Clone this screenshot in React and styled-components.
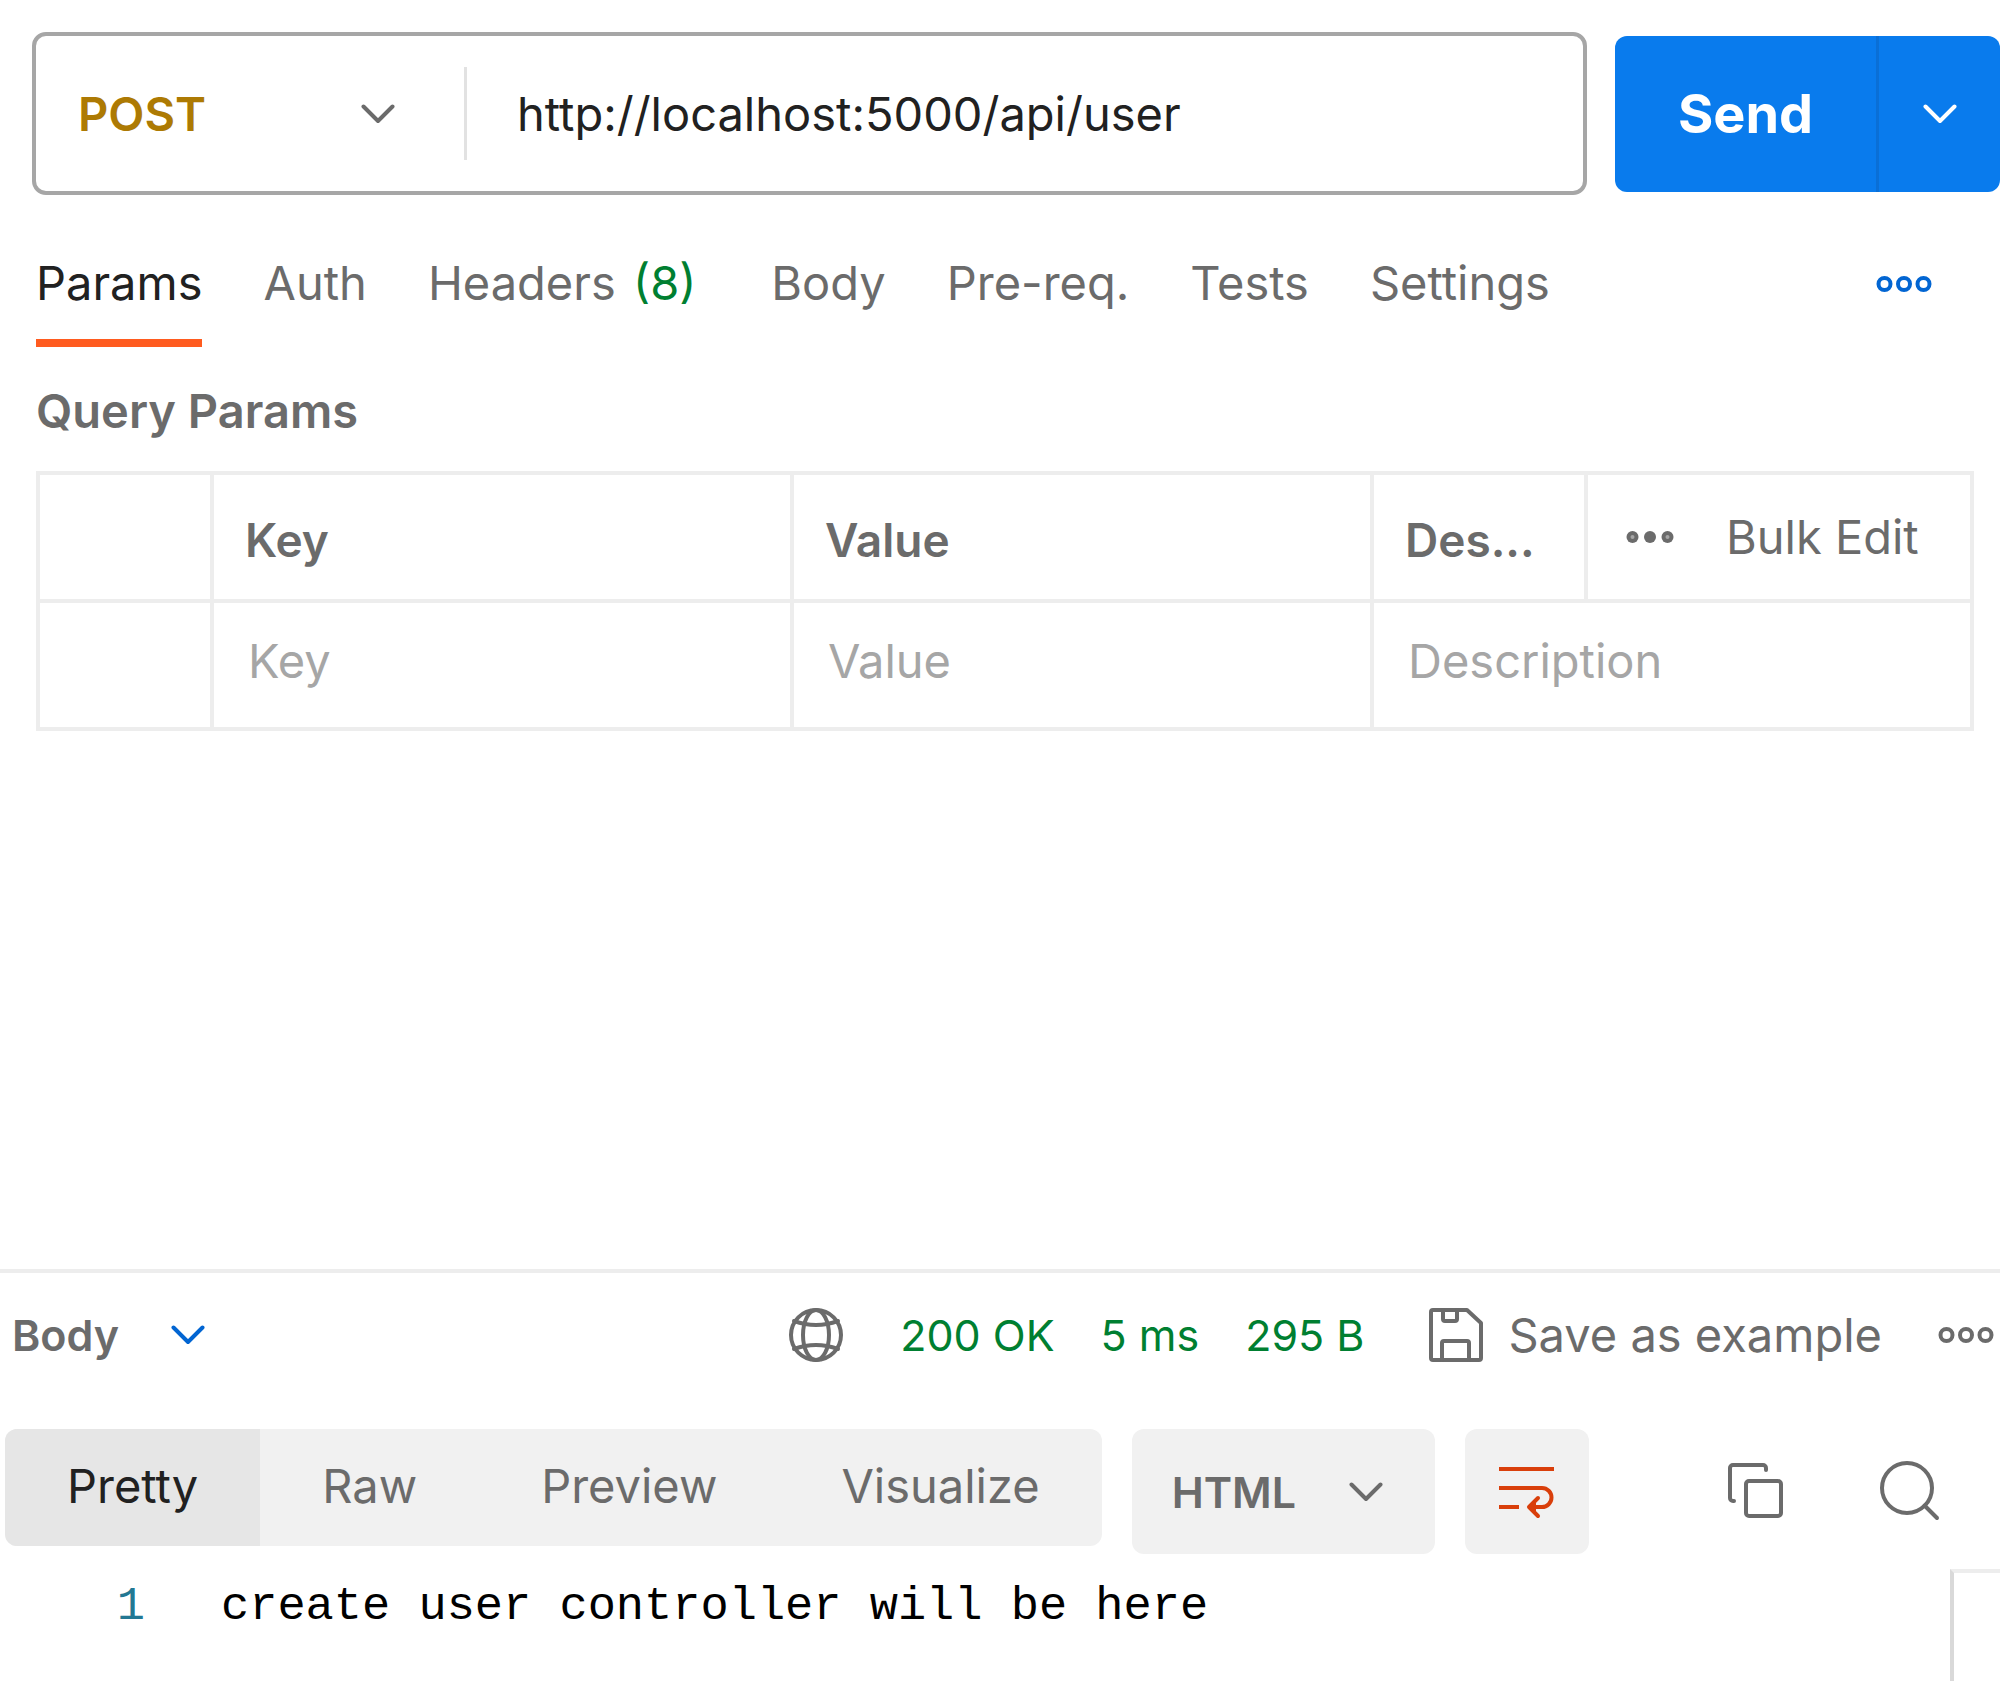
import React, { useState } from "react";
import styled, { createGlobalStyle } from "styled-components";

const color = {
  text: "#212121",
  muted: "#6b6b6b",
  placeholder: "#a6a6a6",
  line: "#ededed",
  surface: "#f1f1f1",
  surfaceActive: "#e6e6e6",
  blue: "#097bed",
  link: "#0265d2",
  green: "#007f31",
  amber: "#ad7a03",
  orange: "#ff5b1f",
  rust: "#d93f0b",
};

const GlobalStyle = createGlobalStyle`
  *, *::before, *::after { box-sizing: border-box; }
  body {
    margin: 0;
    background: #fff;
    color: ${color.muted};
    font: 400 47px/56px Inter, "Liberation Sans", sans-serif;
  }
  button, input, select { margin: 0; font: inherit; color: inherit; }
`;

const Page = styled.main`
  display: flex;
  flex-direction: column;
  min-height: 100vh;
  overflow: hidden;
`;

const Icon = styled.svg`
  display: block;
  flex: none;
  fill: none;
  stroke: currentColor;
  stroke-width: 4;
  stroke-linecap: round;
  stroke-linejoin: round;
`;

const PlainButton = styled.button`
  display: flex;
  align-items: center;
  gap: ${(p) => p.$gap || 0}px;
  padding: 0;
  border: 0;
  background: none;
  color: ${(p) => p.$color || "inherit"};
  white-space: nowrap;
  cursor: pointer;
`;

/* ---- request line ---- */

const RequestLine = styled.form`
  display: flex;
  align-items: center;
  gap: 28px;
  padding: 32px 0 0 32px;
`;

const UrlBox = styled.div`
  flex: 1;
  display: flex;
  align-items: center;
  height: 163px;
  border: 4px solid ${color.placeholder};
  border-radius: 14px;
`;

const SelectWrap = styled.div`
  position: relative;
  display: flex;
  align-items: center;
  width: ${(p) => p.$width}px;
  height: ${(p) => p.$height}px;
  border-radius: 12px;
  background: ${(p) => p.$background || "none"};

  svg {
    position: absolute;
    right: ${(p) => p.$inset}px;
    color: ${(p) => p.$arrow || color.muted};
    pointer-events: none;
  }
`;

const Select = styled.select`
  width: 100%;
  height: 100%;
  padding: 0 0 0 ${(p) => p.$indent}px;
  border: 0;
  background: none;
  appearance: none;
  color: ${(p) => p.$color || color.muted};
  font-size: ${(p) => p.$size || 43}px;
  font-weight: 600;
`;

const MethodArea = styled.div`
  border-right: 3px solid #e2e2e2;
`;

const UrlInput = styled.input`
  flex: 1;
  min-width: 0;
  padding: 0 50px;
  border: 0;
  outline: 0;
  background: none;
  color: ${color.text};
`;

const SendGroup = styled.div`
  display: flex;
  height: 156px;
  border-radius: 12px;
  overflow: hidden;
`;

const SendButton = styled.button`
  width: ${(p) => p.$width}px;
  display: grid;
  place-items: center;
  padding: 0;
  border: 0;
  border-right: ${(p) => (p.$divided ? "3px solid #0a6fd6" : "0")};
  background: ${color.blue};
  color: #fff;
  font-size: 54px;
  font-weight: 700;
`;

/* ---- request tabs ---- */

const Tabs = styled.nav`
  display: flex;
  align-items: center;
  gap: 61px;
  margin-top: 32px;
  padding: 0 68px 0 36px;
`;

const Tab = styled.button`
  padding: 28px 0;
  border: 0;
  border-bottom: 8px solid ${(p) => (p.$active ? color.orange : "transparent")};
  background: none;
  color: ${(p) => (p.$active ? color.text : color.muted)};
  white-space: nowrap;
`;

const Count = styled.span`
  padding: 0 14px 0 4px;
  color: ${color.green};
`;

const TabsMore = styled(PlainButton)`
  margin-left: auto;
  padding-bottom: 6px;
`;

/* ---- query params ---- */

const ParamsPanel = styled.section`
  flex: 1;
  padding: 36px 26px 32px 36px;
`;

const PanelTitle = styled.h2`
  margin: 0 0 32px;
  font-size: 47px;
  font-weight: 600;
`;

const ParamsTable = styled.table`
  width: 100%;
  table-layout: fixed;
  border-collapse: collapse;
`;

const Col = styled.col`
  width: ${(p) => (p.$width ? p.$width + "px" : "auto")};
`;

const HeadCell = styled.th`
  height: 128px;
  padding: 6px 31px 0;
  border: 4px solid ${color.line};
  text-align: left;
  font-size: 46px;
  font-weight: 600;
  white-space: nowrap;
`;

const BodyCell = styled.td`
  height: 128px;
  padding: 0 34px 8px;
  border: 4px solid ${color.line};
`;

const ActionCell = styled.td`
  padding: 0 38px;
  border: 4px solid ${color.line};
`;

const ActionRow = styled.div`
  display: flex;
  align-items: center;
  gap: 52px;
`;

const CellInput = styled.input`
  display: block;
  width: 100%;
  padding: 0;
  border: 0;
  outline: 0;
  background: none;

  &::placeholder { color: ${color.placeholder}; opacity: 1; }
`;

/* ---- response ---- */

const Response = styled.section`
  border-top: 4px solid ${color.line};
`;

const ResponseHeader = styled.header`
  display: flex;
  align-items: center;
  justify-content: space-between;
  height: 124px;
  padding-right: 6px;
`;

const ResponseMeta = styled.div`
  display: flex;
  align-items: center;
  gap: 56px;
`;

const Status = styled.div`
  display: flex;
  align-items: center;
  gap: 46px;
  padding-right: 8px;
  color: ${color.green};
  font-size: 43px;
  white-space: nowrap;
`;

const ViewBar = styled.div`
  display: flex;
  align-items: flex-start;
  gap: 30px;
  padding: 32px 58px 0 5px;
`;

const Segments = styled.div`
  display: flex;
  height: 117px;
  border-radius: 12px;
  background: ${color.surface};
  overflow: hidden;
`;

const Segment = styled.button`
  padding: 0 62px 4px;
  border: 0;
  background: ${(p) => (p.$active ? color.surfaceActive : "none")};
  color: ${(p) => (p.$active ? color.text : color.muted)};
`;

const WrapToggle = styled.button`
  display: grid;
  place-items: center;
  width: 124px;
  height: 125px;
  padding: 0;
  border: 0;
  border-radius: 12px;
  background: ${color.surface};
  color: ${color.rust};
`;

const ViewTools = styled.div`
  display: flex;
  align-items: center;
  gap: 92px;
  height: 124px;
  margin-left: auto;
`;

const CodeArea = styled.div`
  display: flex;
  height: 127px;
  font-family: "Liberation Mono", monospace;
  line-height: 72px;
  color: #000;
`;

const LineNumber = styled.span`
  width: 145px;
  padding-top: 17px;
  text-align: right;
  color: #237893;
`;

const CodeLine = styled.code`
  flex: 1;
  padding: 17px 0 0 76px;
  font: inherit;
  white-space: pre;
`;

const Minimap = styled.aside`
  width: 50px;
  margin-top: 15px;
  border-top: 4px solid ${color.line};
  border-left: 4px solid #d9d9d9;
`;

const Chevron = () => (
  <Icon width="34" height="20" viewBox="0 0 34 20" aria-hidden="true">
    <path d="M2.5 2.5 17 17 31.5 2.5" />
  </Icon>
);

const Rings = () => (
  <Icon width="56" height="18" viewBox="0 0 56 18" aria-hidden="true">
    <circle cx="8.5" cy="9" r="6" />
    <circle cx="28" cy="9" r="6" />
    <circle cx="47.5" cy="9" r="6" />
  </Icon>
);

const Dots = () => (
  <Icon width="48" height="18" viewBox="0 0 48 18" aria-hidden="true">
    <g fill="currentColor" stroke="none">
      <circle cx="6.5" cy="9" r="6" />
      <circle cx="24" cy="9" r="6" />
      <circle cx="41.5" cy="9" r="6" />
    </g>
    <g fill="#a6a6a6" stroke="none">
      <circle cx="6.5" cy="9" r="2" />
      <circle cx="41.5" cy="9" r="2" />
    </g>
  </Icon>
);

const Globe = () => (
  <Icon width="56" height="56" viewBox="0 0 56 56" role="img" aria-label="Network">
    <circle cx="28" cy="28" r="25" />
    <ellipse cx="28" cy="28" rx="13" ry="25" />
    <path d="M6 14Q28 22 50 14M6 42Q28 34 50 42" />
  </Icon>
);

const Save = () => (
  <Icon width="56" height="56" viewBox="0 0 56 56" aria-hidden="true">
    <path d="M5 3H39L53 16V51a2 2 0 0 1-2 2H5a2 2 0 0 1-2-2V5a2 2 0 0 1 2-2Z" />
    <path d="M15 3V12a2 2 0 0 0 2 2H27a2 2 0 0 0 2-2V3M14 53V36a2 2 0 0 1 2-2H39a2 2 0 0 1 2 2V53" />
  </Icon>
);

const WrapIcon = () => (
  <Icon width="60" height="60" viewBox="0 0 60 60" aria-hidden="true">
    <path strokeLinecap="butt" d="M2 7H57M2 26H45a9.5 9.5 0 0 1 0 19H33M2 45H22" />
    <path d="M41 36 32 45 41 54" />
    <path d="M32 45 39 38V52Z" fill="currentColor" stroke="none" />
  </Icon>
);

const Copy = () => (
  <Icon width="60" height="60" viewBox="0 0 60 60" aria-hidden="true">
    <rect x="20" y="20" width="35" height="35" rx="3" />
    <path d="M8 40H7a3 3 0 0 1-3-3V7a3 3 0 0 1 3-3H37a3 3 0 0 1 3 3V9" />
  </Icon>
);

const Search = () => (
  <Icon width="64" height="64" viewBox="0 0 64 64" aria-hidden="true">
    <circle cx="29" cy="29" r="25" />
    <path d="M46.5 46.5 59 59" />
  </Icon>
);

const requestTabs = [
  { label: "Params" },
  { label: "Auth" },
  { label: "Headers", count: 8 },
  { label: "Body" },
  { label: "Pre-req." },
  { label: "Tests" },
  { label: "Settings" },
];

const views = ["Pretty", "Raw", "Preview", "Visualize"];

export default function App() {
  const [tab, setTab] = useState("Params");
  const [view, setView] = useState("Pretty");
  const [url, setUrl] = useState("http://localhost:5000/api/user");

  return (
    <Page>
      <GlobalStyle />
      <RequestLine onSubmit={(e) => e.preventDefault()}>
        <UrlBox>
          <MethodArea>
            <SelectWrap $width={428} $height={93} $inset={69}>
              <Select aria-label="Method" $indent={42} $size={47} $color={color.amber} defaultValue="POST">
                <option>POST</option>
              </Select>
              <Chevron />
            </SelectWrap>
          </MethodArea>
          <UrlInput aria-label="Request URL" value={url} onChange={(e) => setUrl(e.target.value)} />
        </UrlBox>
        <SendGroup>
          <SendButton type="submit" $width={264} $divided>Send</SendButton>
          <SendButton type="button" $width={121} aria-label="Send options"><Chevron /></SendButton>
        </SendGroup>
      </RequestLine>

      <Tabs aria-label="Request">
        {requestTabs.map(({ label, count }) => (
          <Tab key={label} type="button" $active={tab === label} onClick={() => setTab(label)}>
            {label}
            {count && <> <Count>({count})</Count></>}
          </Tab>
        ))}
        <TabsMore type="button" $color={color.link} aria-label="More tabs"><Rings /></TabsMore>
      </Tabs>

      <ParamsPanel>
        <PanelTitle>Query Params</PanelTitle>
        <ParamsTable>
          <colgroup>
            <Col $width={174} />
            <Col />
            <Col />
            <Col $width={214} />
            <Col $width={386} />
          </colgroup>
          <thead>
            <tr>
              <HeadCell />
              <HeadCell>Key</HeadCell>
              <HeadCell>Value</HeadCell>
              <HeadCell>Des...</HeadCell>
              <ActionCell>
                <ActionRow>
                  <PlainButton type="button" aria-label="Columns"><Dots /></PlainButton>
                  <PlainButton type="button">Bulk Edit</PlainButton>
                </ActionRow>
              </ActionCell>
            </tr>
          </thead>
          <tbody>
            <tr>
              <BodyCell />
              <BodyCell><CellInput aria-label="Key" placeholder="Key" /></BodyCell>
              <BodyCell><CellInput aria-label="Value" placeholder="Value" /></BodyCell>
              <BodyCell colSpan={2}><CellInput aria-label="Description" placeholder="Description" /></BodyCell>
            </tr>
          </tbody>
        </ParamsTable>
      </ParamsPanel>

      <Response>
        <ResponseHeader>
          <SelectWrap $width={205} $height={93} $inset={0} $arrow={color.link}>
            <Select aria-label="Response section" $indent={12} defaultValue="Body">
              <option>Body</option>
            </Select>
            <Chevron />
          </SelectWrap>
          <ResponseMeta>
            <Globe />
            <Status>
              <span>200 OK</span>
              <span>5 ms</span>
              <span>295 B</span>
            </Status>
            <PlainButton type="button" $gap={24}><Save />Save as example</PlainButton>
            <PlainButton type="button" aria-label="More response actions"><Rings /></PlainButton>
          </ResponseMeta>
        </ResponseHeader>

        <ViewBar>
          <Segments>
            {views.map((name) => (
              <Segment key={name} type="button" $active={view === name} onClick={() => setView(name)}>
                {name}
              </Segment>
            ))}
          </Segments>
          <SelectWrap $width={303} $height={125} $inset={52} $background={color.surface}>
            <Select aria-label="Response format" $indent={40} defaultValue="HTML">
              <option>HTML</option>
            </Select>
            <Chevron />
          </SelectWrap>
          <WrapToggle type="button" aria-label="Wrap lines"><WrapIcon /></WrapToggle>
          <ViewTools>
            <PlainButton type="button" aria-label="Copy"><Copy /></PlainButton>
            <PlainButton type="button" aria-label="Search"><Search /></PlainButton>
          </ViewTools>
        </ViewBar>

        <CodeArea>
          <LineNumber>1</LineNumber>
          <CodeLine>create user controller will be here</CodeLine>
          <Minimap />
        </CodeArea>
      </Response>
    </Page>
  );
}
